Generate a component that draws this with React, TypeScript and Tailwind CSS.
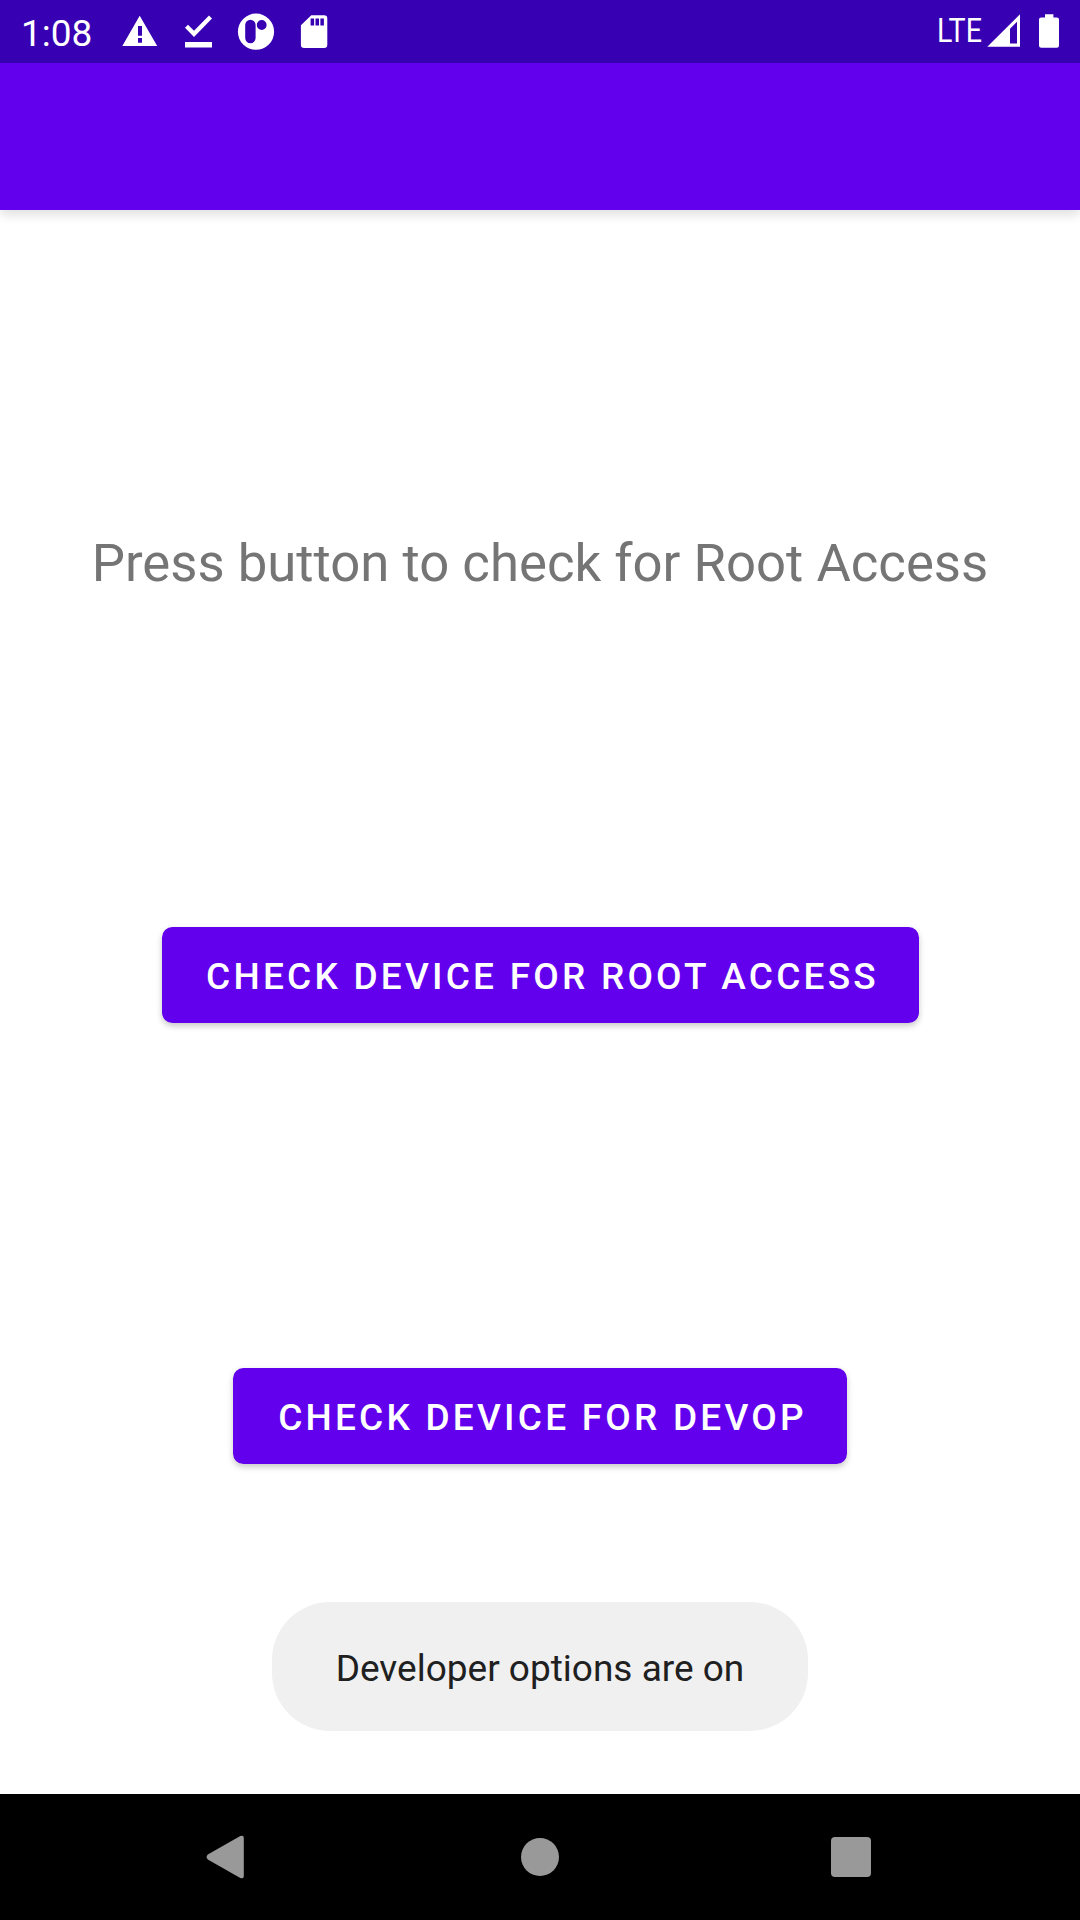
import React from 'react';

function StatusBar() {
  return (
    <header className="flex h-[63px] shrink-0 items-center justify-between bg-[#3700b3] text-white">
      <div className="flex h-full items-center pl-[21px]">
        <span className="w-[94px] pt-[3px] text-[37px] leading-[43px]">1:08</span>
        <svg className="h-[63px] w-[220px]" viewBox="115 0 220 63" fill="#fff">
          <path
            fillRule="evenodd"
            d="M139.7 15.7L157.2 46H122.3ZM138 26h4v9.7h-4ZM138 38h4v4.8h-4Z"
          />
          <path d="M209 15.6L212 18.6L194 37L185 27.8L188 24.7L194 30.7ZM185 42.1h27v5.5h-27Z" />
          <path
            fillRule="evenodd"
            d="M256 13.6a18.1 18.1 0 1 1 0 36.2a18.1 18.1 0 1 1 0-36.2ZM250.4 19.8a5.2 5.2 0 0 0-5.2 5.2v13a5.2 5.2 0 0 0 10.4 0v-13a5.2 5.2 0 0 0-5.2-5.2ZM261.7 20.1a4.9 4.9 0 1 0 0 9.8a4.9 4.9 0 1 0 0-9.8Z"
          />
          <path
            fillRule="evenodd"
            d="M311.3 15.3h12.8a3.2 3.2 0 0 1 3.2 3.2v26.2a3.2 3.2 0 0 1-3.2 3.2h-20a3.2 3.2 0 0 1-3.2-3.2V25.3ZM310.6 18.5v7h3.5v-7ZM315.5 18.5v7h3.5v-7ZM320.4 18.5v7h3.5v-7Z"
          />
        </svg>
      </div>
      <div className="flex h-full items-center">
        <span className="w-[50px] origin-left scale-x-[0.88] pb-[2px] text-[32.5px] leading-[38px]">
          LTE
        </span>
        <svg className="h-[63px] w-[93px]" viewBox="987 0 93 63" fill="#fff">
          <path fillRule="evenodd" d="M987.3 46.8L1020 14.2V46.8ZM1010 28.7V43.6h7V21.7Z" />
          <path d="M1045 14.2h8.4v3.2h3.4a2.2 2.2 0 0 1 2.2 2.2v26a2.2 2.2 0 0 1-2.2 2.2h-15.6a2.2 2.2 0 0 1-2.2-2.2v-26a2.2 2.2 0 0 1 2.2-2.2h3.8Z" />
        </svg>
      </div>
    </header>
  );
}

function ActionButton({ label, className }: { label: string; className: string }) {
  return (
    <button
      className={`flex h-[96px] shrink-0 items-center justify-center rounded-[10.5px] bg-[#6200ee] pt-[4px] pl-[5px] text-[37px] font-medium tracking-[3.22px] whitespace-nowrap text-white shadow-[0_3px_6px_rgba(0,0,0,0.22)] ${className}`}
    >
      {label}
    </button>
  );
}

function NavigationBar() {
  return (
    <nav className="flex h-[126px] shrink-0 items-center justify-between bg-black pr-[209px] pl-[206px]">
      <svg className="h-[44px] w-[38px]" viewBox="0 0 38 44" fill="#999">
        <path d="M1.8 19.6L34.3 1.1Q37.8 -0.3 37.8 3V41Q37.8 44.3 34.3 42.9L1.8 24.4Q-0.6 22 1.8 19.6Z" />
      </svg>
      <div className="ml-[5px] size-[38px] rounded-full bg-[#999]" />
      <div className="size-[40px] rounded-[4px] bg-[#999]" />
    </nav>
  );
}

export default function App() {
  return (
    <div className="flex h-[1920px] w-[1080px] flex-col overflow-hidden bg-white font-[Roboto,sans-serif]">
      <StatusBar />
      <div className="h-[147px] shrink-0 bg-[#6200ee] shadow-[0_5px_10px_rgba(0,0,0,0.12)]" />
      <main className="flex flex-1 flex-col items-center">
        <h1 className="mt-[322px] text-[52.7px] leading-[62px] font-normal whitespace-nowrap text-[#757575]">
          Press button to check for Root Access
        </h1>
        <ActionButton label="CHECK DEVICE FOR ROOT ACCESS" className="mt-[333px] w-[757px]" />
        <ActionButton label="CHECK DEVICE FOR DEVOP" className="mt-[345px] w-[614px]" />
        <div className="mt-[138px] flex h-[129px] w-[536px] items-center justify-center rounded-[58px] bg-[#f0f0f0] pt-[4px] text-[37px] whitespace-nowrap text-[#202020]">
          Developer options are on
        </div>
      </main>
      <NavigationBar />
    </div>
  );
}
